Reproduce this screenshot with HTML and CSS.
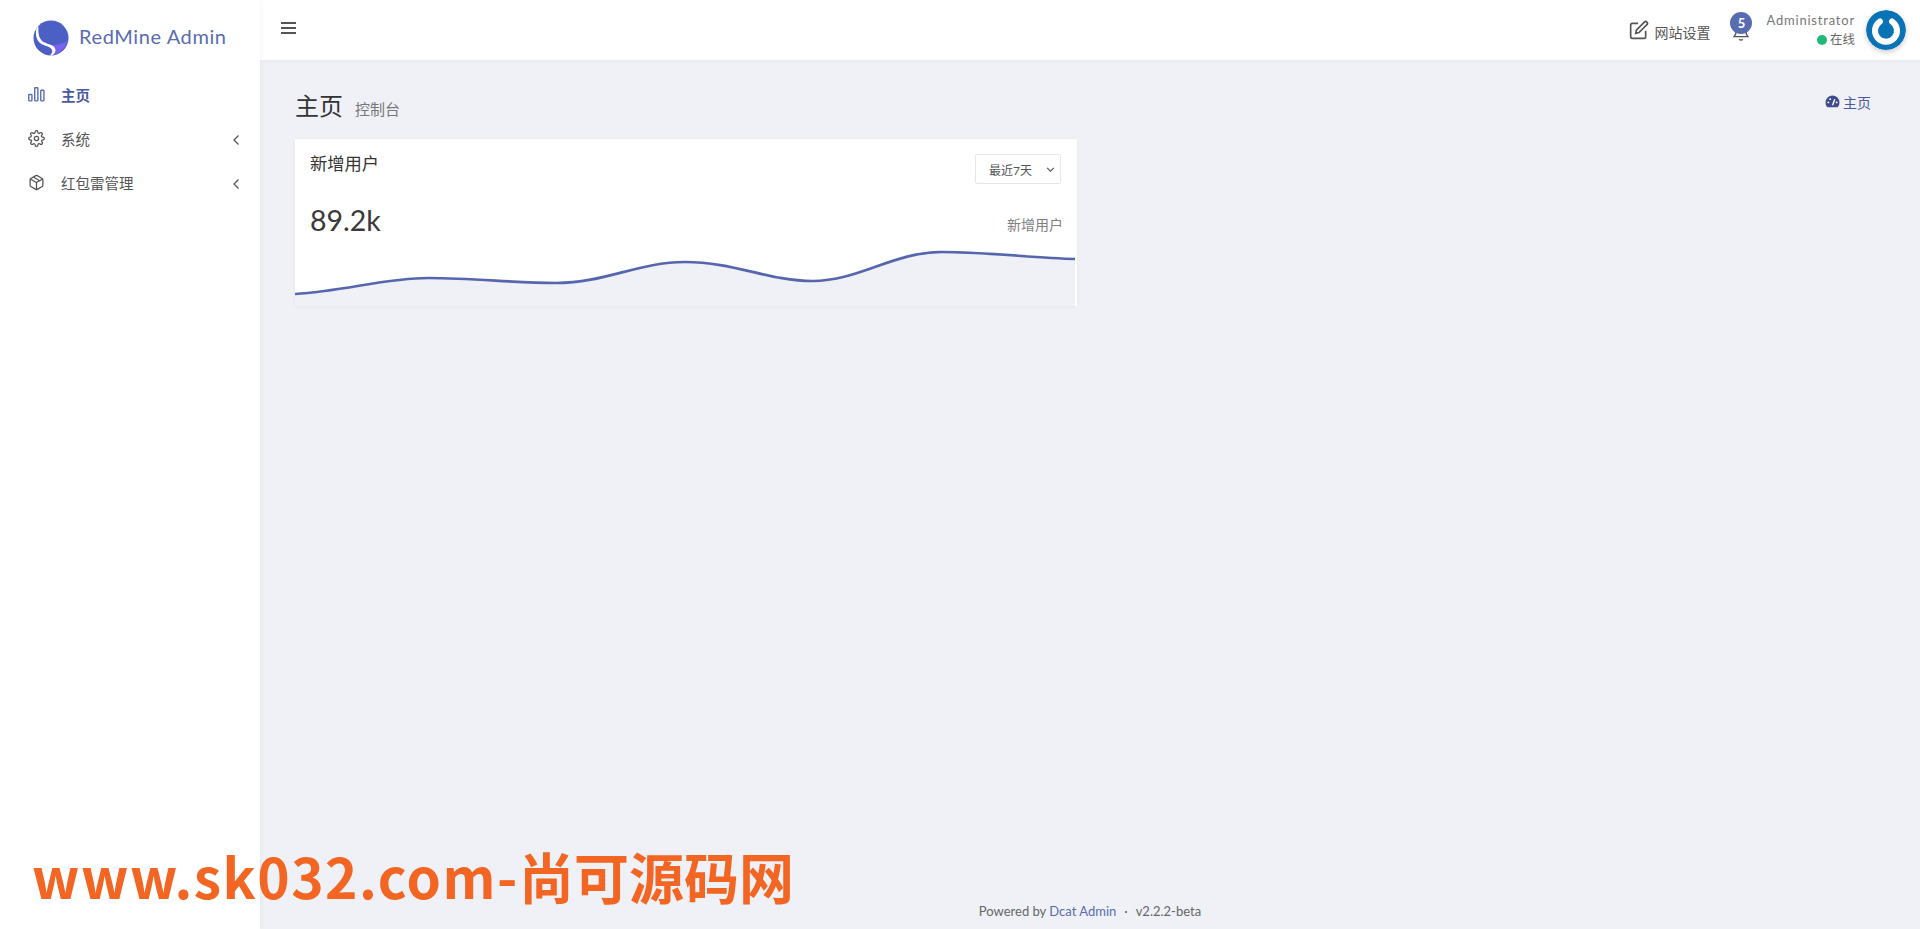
FILE: index.html
```html
<!DOCTYPE html>
<html lang="zh-CN">
<head>
  <meta charset="UTF-8">
  <title>RedMine Admin</title>
  <link rel="stylesheet" href="styles.css">
</head>
<body>
  <aside class="sidebar">
    <div class="brand">
      <svg class="brand-logo" viewBox="0 0 36 36">
        <circle cx="18" cy="18" r="17.5" fill="#4c5fc4"/>
        <path d="M10 22C16 26 26 26 34.500 21 32.500 28 27 33 21 35 21 29 16 26 10 24z" fill="#7a62ee"/>
        <path d="M3.600 8C1.800 15 3.500 21 8.500 24c4 2.500 9.500 2 10.700 6.500.4 2-.7 3.700-2.700 5l3-.3c2.500-2 3.500-4 2.800-6.200C21 24.500 15 24.500 10.500 22 6.500 19.500 4.800 14 5.500 6.500z" fill="#fff"/>
      </svg>
      <span class="brand-name">RedMine Admin</span>
    </div>
    <nav class="menu">
      <a class="menu-item active">
        <svg class="menu-icon" viewBox="0 0 16 14"><rect x="0.7" y="7" width="3" height="6" rx="0.6"/><rect x="6.3" y="0.7" width="3" height="12.3" rx="0.6"/><rect x="12" y="3" width="3" height="10" rx="0.6"/></svg>
        <span class="menu-text">主页</span>
      </a>
      <a class="menu-item">
        <svg class="menu-icon" viewBox="0 0 24 24"><circle cx="12" cy="12" r="3"/><path d="M19.4 15a1.65 1.65 0 0 0 .33 1.82l.06.06a2 2 0 1 1-2.83 2.83l-.06-.06a1.65 1.65 0 0 0-2.82 1.17V21a2 2 0 1 1-4 0v-.09a1.65 1.65 0 0 0-2.82-1.18l-.06.06a2 2 0 1 1-2.83-2.83l.06-.06A1.65 1.65 0 0 0 3.09 14H3a2 2 0 1 1 0-4h.09A1.65 1.65 0 0 0 4.27 7.18l-.06-.06a2 2 0 1 1 2.83-2.83l.06.06A1.65 1.65 0 0 0 9.92 3.17V3a2 2 0 1 1 4 0v.09a1.65 1.65 0 0 0 2.82 1.18l.06-.06a2 2 0 1 1 2.83 2.83l-.06.06A1.65 1.65 0 0 0 20.91 10H21a2 2 0 1 1 0 4h-.09a1.65 1.65 0 0 0-1.51 1z"/></svg>
        <span class="menu-text">系统</span>
        <svg class="menu-arrow" viewBox="0 0 8 12"><path d="M6.500 1.500 2 6l4.500 4.500"/></svg>
      </a>
      <a class="menu-item">
        <svg class="menu-icon" viewBox="0 0 24 24"><path d="M21 16V8a2 2 0 0 0-1-1.730l-7-4a2 2 0 0 0-2 0l-7 4A2 2 0 0 0 3 8v8a2 2 0 0 0 1 1.730l7 4a2 2 0 0 0 2 0l7-4A2 2 0 0 0 21 16z"/><path d="M3.300 7 12 12l8.700-5M12 22V12M7.500 4.300l9 5.200"/></svg>
        <span class="menu-text">红包雷管理</span>
        <svg class="menu-arrow" viewBox="0 0 8 12"><path d="M6.500 1.500 2 6l4.500 4.500"/></svg>
      </a>
    </nav>
  </aside>

  <div class="main">
    <header class="navbar">
      <button class="nav-toggle"><span></span><span></span><span></span></button>
      <div class="nav-right">
        <a class="nav-setting">
          <svg class="nav-edit" viewBox="0 0 24 24"><path d="M11 4H4a2 2 0 0 0-2 2v14a2 2 0 0 0 2 2h14a2 2 0 0 0 2-2v-7"/><path d="M18.500 2.500a2.120 2.120 0 0 1 3 3L12 15l-4 1 1-4 9.500-9.500z"/></svg>
          <span>网站设置</span>
        </a>
        <div class="nav-bell">
          <svg class="bell-icon" viewBox="0 0 20 24"><path d="M4 8v8l-2 3h16l-2-3V8"/><path d="M8 22c1 1.200 3 1.200 4 0"/></svg>
          <span class="badge">5</span>
        </div>
        <div class="user-info">
          <div class="user-name">Administrator</div>
          <div class="user-status"><i class="dot"></i>在线</div>
        </div>
        <svg class="avatar" viewBox="0 0 40 40">
          <circle cx="20" cy="20" r="20" fill="#0a73b7"/>
          <path d="M14 11.500a11 11 0 1 0 12 0" fill="none" stroke="#fff" stroke-width="6" stroke-linecap="round"/>
          <rect x="17" y="7" width="6" height="14" rx="3" fill="#0a73b7"/>
        </svg>
      </div>
    </header>

    <section class="content">
      <div class="content-header">
        <div class="page-title">
          <h1>主页</h1>
          <small>控制台</small>
        </div>
        <div class="breadcrumb">
          <svg class="crumb-icon" viewBox="0 0 16 14"><path d="M8 0.500A7.500 7.500 0 0 0 0.500 8c0 2 .7 3.800 2 5.200h11c1.300-1.400 2-3.200 2-5.200A7.500 7.500 0 0 0 8 .5z" fill="#3f4d8f"/><path d="M8 11 10.500 4.500" stroke="#fff" stroke-width="1.500"/><circle cx="3.500" cy="8" r="1" fill="#fff"/><circle cx="5.500" cy="4.500" r="1" fill="#fff"/><circle cx="12.500" cy="8" r="1" fill="#fff"/></svg>
          <span>主页</span>
        </div>
      </div>

      <div class="card">
        <div class="card-head">
          <h4>新增用户</h4>
          <div class="range-select">
            <span>最近7天</span>
            <svg viewBox="0 0 8 6"><path d="M1 1.500 4 4.500l3-3"/></svg>
          </div>
        </div>
        <div class="card-metric">
          <span class="metric-value">89.2k</span>
          <span class="metric-label">新增用户</span>
        </div>
        <svg class="chart" viewBox="0 0 782 66" preserveAspectRatio="none">
          <path class="chart-area" d="M0 54C50 51 90 38 134 38 180 38 220 43 262 43 310 43 345 22 391 22 440 22 475 41 519 41 565 41 600 12 648 12 695 12 740 18 782 19V66H0z"/>
          <path class="chart-line" d="M0 54C50 51 90 38 134 38 180 38 220 43 262 43 310 43 345 22 391 22 440 22 475 41 519 41 565 41 600 12 648 12 695 12 740 18 782 19"/>
        </svg>
      </div>
    </section>

    <footer class="footer">
      Powered by <a>Dcat Admin</a><span class="sep">·</span>v2.2.2-beta
    </footer>
  </div>

  <div class="watermark"><span class="watermark-url">www.sk032.com-</span>尚可源码网</div>
</body>
</html>
```

FILE: styles.css
```css
html, body {
  margin: 0;
  padding: 0;
  height: 100%;
  box-sizing: border-box;
  font-family: "Lato", "Noto Sans CJK SC", sans-serif;
  font-size: 14px;
  color: #414750;
  background-color: #eff1f7;
  overflow: hidden;
}
*, *:before, *:after { box-sizing: inherit; }
body { display: flex; }

/* sidebar */
.sidebar {
  width: 260px;
  flex: none;
  background-color: #fff;
  box-shadow: 0 0 6px rgba(0, 0, 0, .06);
  z-index: 2;
}
.brand {
  height: 60px;
  display: flex;
  align-items: center;
  padding: 16px 0 0 33px;
}
.brand-logo { width: 36px; height: 36px; flex: none; }
.brand-name {
  margin: 0 0 5px 10px;
  font-size: 20px;
  letter-spacing: .6px;
  color: #586cb1;
}
.menu { padding-top: 12px; }
.menu-item {
  height: 44px;
  display: flex;
  align-items: center;
  padding: 0 20px 0 28px;
  color: #555;
}
.menu-item.active { color: #4a5a9f; font-weight: 700; }
.menu-icon {
  width: 17px;
  height: 17px;
  flex: none;
  fill: none;
  stroke: currentColor;
  stroke-width: 1.800;
}
.menu-item.active .menu-icon { stroke: #586cb1; stroke-width: 1.300; }
.menu-text { margin-left: 16px; flex: 1; font-size: 14.500px; }
.menu-arrow {
  width: 8px;
  height: 12px;
  margin-top: 4px;
  fill: none;
  stroke: #555;
  stroke-width: 1.300;
}

/* top bar */
.main {
  flex: 1;
  min-width: 0;
  display: flex;
  flex-direction: column;
}
.navbar {
  height: 60px;
  flex: none;
  display: flex;
  align-items: center;
  justify-content: space-between;
  padding: 0 14px 0 21px;
  background-color: #fff;
  box-shadow: 0 1px 4px rgba(0, 0, 0, .04);
}
.nav-toggle {
  width: 15px;
  padding: 0;
  margin-bottom: 4px;
  border: 0;
  background: none;
  display: flex;
  flex-direction: column;
  gap: 3px;
}
.nav-toggle span { height: 2px; background-color: #555; }
.nav-right { display: flex; align-items: center; }
.nav-setting {
  display: flex;
  align-items: center;
  color: #555;
  font-size: 14px;
}
.nav-setting span { margin: 3px 0 0 5px; }
.nav-edit {
  width: 20px;
  height: 20px;
  fill: none;
  stroke: #555;
  stroke-width: 2;
}
.nav-bell {
  position: relative;
  width: 22px;
  height: 36px;
  margin: 0 14px 0 20px;
}
.bell-icon {
  position: absolute;
  left: 2px;
  top: 8px;
  width: 18px;
  height: 21px;
  fill: none;
  stroke: #555;
  stroke-width: 1.500;
}
.badge {
  position: absolute;
  left: 0;
  top: 0;
  width: 22px;
  height: 22px;
  border-radius: 50%;
  background-color: #586cb1;
  color: #fff;
  font-size: 13px;
  font-weight: 700;
  text-align: center;
  line-height: 22px;
}
.user-info { text-align: right; }
.user-name { font-size: 13px; letter-spacing: .8px; color: #777; line-height: 20px; }
.user-status {
  display: flex;
  align-items: center;
  justify-content: flex-end;
  font-size: 12.500px;
  color: #666;
  line-height: 20px;
}
.dot {
  width: 10px;
  height: 10px;
  margin-right: 3px;
  border-radius: 50%;
  background-color: #21b978;
}
.avatar {
  width: 40px;
  height: 40px;
  margin-left: 11px;
  border-radius: 50%;
  box-shadow: 0 2px 5px rgba(0, 0, 0, .2);
}

/* content */
.content { flex: 1; padding: 0 35px; }
.content-header {
  display: flex;
  align-items: center;
  justify-content: space-between;
  height: 79px;
  padding-top: 10px;
}
.page-title { display: flex; align-items: baseline; }
.page-title h1 {
  margin: 0;
  font-size: 24px;
  font-weight: 400;
  color: #333;
}
.page-title small { margin-left: 12px; font-size: 15px; color: #777; }
.breadcrumb {
  display: flex;
  align-items: center;
  color: #4a5a9f;
  font-size: 14px;
  margin-bottom: 6px;
  padding-right: 14px;
}
.crumb-icon { width: 15px; height: 13px; margin-right: 3px; }

.card {
  width: 782px;
  height: 167px;
  display: flex;
  flex-direction: column;
  background-color: #fff;
  box-shadow: 0 1px 4px rgba(0, 0, 0, .05);
}
.card-head {
  display: flex;
  align-items: flex-start;
  justify-content: space-between;
  padding: 12px 16px 0 15px;
}
.card-head h4 {
  margin: 0;
  font-size: 17.300px;
  font-weight: 400;
  line-height: 26px;
  color: #333;
}
.range-select {
  width: 86px;
  height: 30px;
  margin-top: 3px;
  display: flex;
  align-items: center;
  justify-content: space-between;
  padding: 0 5px 0 13px;
  border: 1px solid #e5e7ec;
  border-radius: 2px;
  font-size: 12px;
  color: #555;
}
.range-select svg { width: 9px; height: 7px; fill: none; stroke: #555; stroke-width: 1; }
.card-metric {
  display: flex;
  align-items: center;
  justify-content: space-between;
  padding: 16px 14px 0 15px;
}
.metric-value { font-size: 28.500px; color: #3a3a3a; line-height: 40px; }
.metric-label { font-size: 14px; color: #808080; margin-top: 7px; }
.chart { width: 780px; height: 66px; margin-top: auto; display: block; }
.chart-area { fill: #eff1f7; }
.chart-line { fill: none; stroke: #5566ae; stroke-width: 2.700; }

.footer {
  height: 34px;
  flex: none;
  padding-top: 8px;
  text-align: center;
  font-size: 13px;
  color: #666;
}
.footer a { color: #586cb1; }
.footer .sep { margin: 0 8px; }

/* site stamp over the page */
.watermark {
  position: absolute;
  left: 32px;
  top: 838px;
  z-index: 5;
  font-family: "Noto Sans CJK SC", sans-serif;
  font-size: 55px;
  font-weight: 700;
  line-height: 75px;
  color: #f26522;
  white-space: nowrap;
}
.watermark-url { letter-spacing: 1.500px; }
```
